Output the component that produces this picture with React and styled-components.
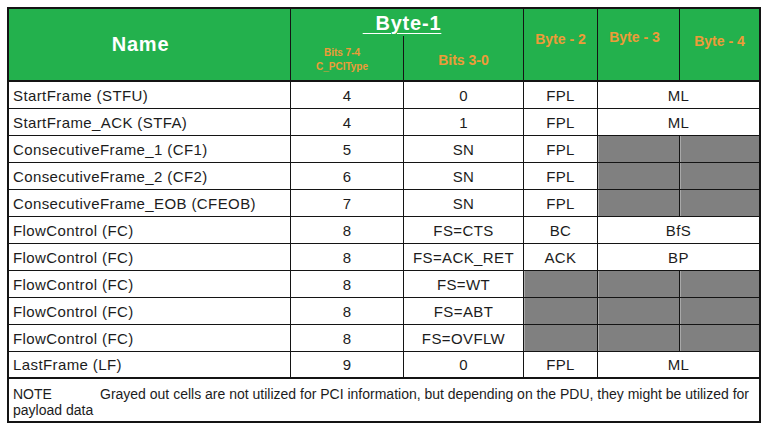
import React from "react";
import styled, { createGlobalStyle } from "styled-components";

const GlobalStyle = createGlobalStyle`
  html, body {
    margin: 0;
    padding: 0;
    background: #ffffff;
  }
  body {
    font-family: "Liberation Sans", Arial, sans-serif;
  }
`;

const Page = styled.div`
  padding: 7px 0 0 7px;
`;

const Table = styled.div`
  width: 750px;
  display: grid;
  grid-template-columns: 281px 112px 119px 73px 81px 79px;
  grid-template-rows: 26px 45px repeat(11, 26px) 42px;
  gap: 1px;
  background: #141414;
  border: 2px solid #141414;
`;

const Head = styled.div`
  background: #23b14d;
  grid-column: ${(p) => p.$col || "auto"};
  grid-row: ${(p) => p.$row || "auto"};
  display: flex;
  flex-direction: column;
  align-items: center;
  justify-content: ${(p) => (p.$top ? "flex-start" : "center")};
  padding-top: ${(p) => p.$top || 0}px;
  padding-right: ${(p) => p.$shift || 0}px;
  border-bottom: ${(p) => (p.$bottom ? "1px solid #141414" : "none")};
  margin-bottom: ${(p) => (p.$join ? "-1px" : 0)};
  box-sizing: border-box;
`;

const Title = styled.span`
  color: #ffffff;
  font-weight: bold;
  font-size: 20px;
  letter-spacing: 0.8px;
  white-space: pre;
  text-decoration: ${(p) => (p.$underline ? "underline" : "none")};
  text-underline-offset: 3px;
  text-decoration-thickness: 1px;
`;

const SubTitle = styled.span`
  color: #ee9b38;
  font-weight: bold;
  font-size: ${(p) => (p.$small ? "10px" : "14px")};
  line-height: ${(p) => (p.$small ? "14px" : "16px")};
  text-align: center;
`;

const Cell = styled.div`
  background: ${(p) => (p.$gray ? "#808080" : "#ffffff")};
  grid-column: ${(p) => (p.$span ? `span ${p.$span}` : "auto")};
  display: flex;
  align-items: center;
  justify-content: ${(p) => (p.$left ? "flex-start" : "center")};
  padding-left: ${(p) => (p.$left ? "4px" : 0)};
  font-size: 15px;
  letter-spacing: 0.4px;
  color: #1c1c1c;
  white-space: nowrap;
  border-bottom: ${(p) => (p.$last ? "1px solid #141414" : "none")};
  box-sizing: border-box;
  box-shadow: ${(p) => (p.$gray ? "inset 1px 0 0 #a8a8a8" : "none")};
`;

const Note = styled.div`
  grid-column: 1 / -1;
  background: #ffffff;
  padding: 7px 4px 0;
  font-size: 14px;
  line-height: 16px;
  letter-spacing: 0;
  color: #1c1c1c;
`;

const NoteLine = styled.div`
  white-space: nowrap;
`;

const NoteLabel = styled.span`
  display: inline-block;
  width: 87px;
`;

const rows = [
  ["StartFrame (STFU)", "4", "0", "FPL", "ML"],
  ["StartFrame_ACK (STFA)", "4", "1", "FPL", "ML"],
  ["ConsecutiveFrame_1 (CF1)", "5", "SN", "FPL", null, null],
  ["ConsecutiveFrame_2 (CF2)", "6", "SN", "FPL", null, null],
  ["ConsecutiveFrame_EOB (CFEOB)", "7", "SN", "FPL", null, null],
  ["FlowControl (FC)", "8", "FS=CTS", "BC", "BfS"],
  ["FlowControl (FC)", "8", "FS=ACK_RET", "ACK", "BP"],
  ["FlowControl (FC)", "8", "FS=WT", null, null, null],
  ["FlowControl (FC)", "8", "FS=ABT", null, null, null],
  ["FlowControl (FC)", "8", "FS=OVFLW", null, null, null],
  ["LastFrame (LF)", "9", "0", "FPL", "ML"],
];

function Row({ data, last }) {
  const [name, ...rest] = data;
  const merged = rest.length === 4;
  return (
    <>
      <Cell $left $last={last}>{name}</Cell>
      {rest.map((v, i) => (
        <Cell
          key={i}
          $gray={v === null}
          $span={merged && i === 3 ? 2 : 0}
          $last={last}
        >
          {v}
        </Cell>
      ))}
    </>
  );
}

export default function App() {
  return (
    <Page>
      <GlobalStyle />
      <Table>
        <Head $col="1" $row="1 / span 2" $bottom $shift={18}>
          <Title>Name</Title>
        </Head>
        <Head $col="2 / span 2" $row="1" $join $top={3} $shift={10}>
          <Title $underline>{"  Byte-1"}</Title>
        </Head>
        <Head $col="4" $row="1 / span 2" $bottom $top={22}>
          <SubTitle>Byte - 2</SubTitle>
        </Head>
        <Head $col="5" $row="1 / span 2" $bottom $top={20} $shift={8}>
          <SubTitle>Byte - 3</SubTitle>
        </Head>
        <Head $col="6" $row="1 / span 2" $bottom $top={24}>
          <SubTitle>Byte - 4</SubTitle>
        </Head>
        <Head $col="2" $row="2" $bottom $top={10} $shift={10}>
          <SubTitle $small>
            Bits 7-4
            <br />
            C_PCIType
          </SubTitle>
        </Head>
        <Head $col="3" $row="2" $bottom $top={16}>
          <SubTitle>Bits 3-0</SubTitle>
        </Head>
        {rows.map((r, i) => (
          <Row key={i} data={r} last={i === rows.length - 1} />
        ))}
        <Note>
          <NoteLine>
            <NoteLabel>NOTE</NoteLabel>Grayed out cells are not utilized for
            PCI information, but depending on the PDU, they might be utilized
            for
          </NoteLine>
          <NoteLine>payload data</NoteLine>
        </Note>
      </Table>
    </Page>
  );
}
